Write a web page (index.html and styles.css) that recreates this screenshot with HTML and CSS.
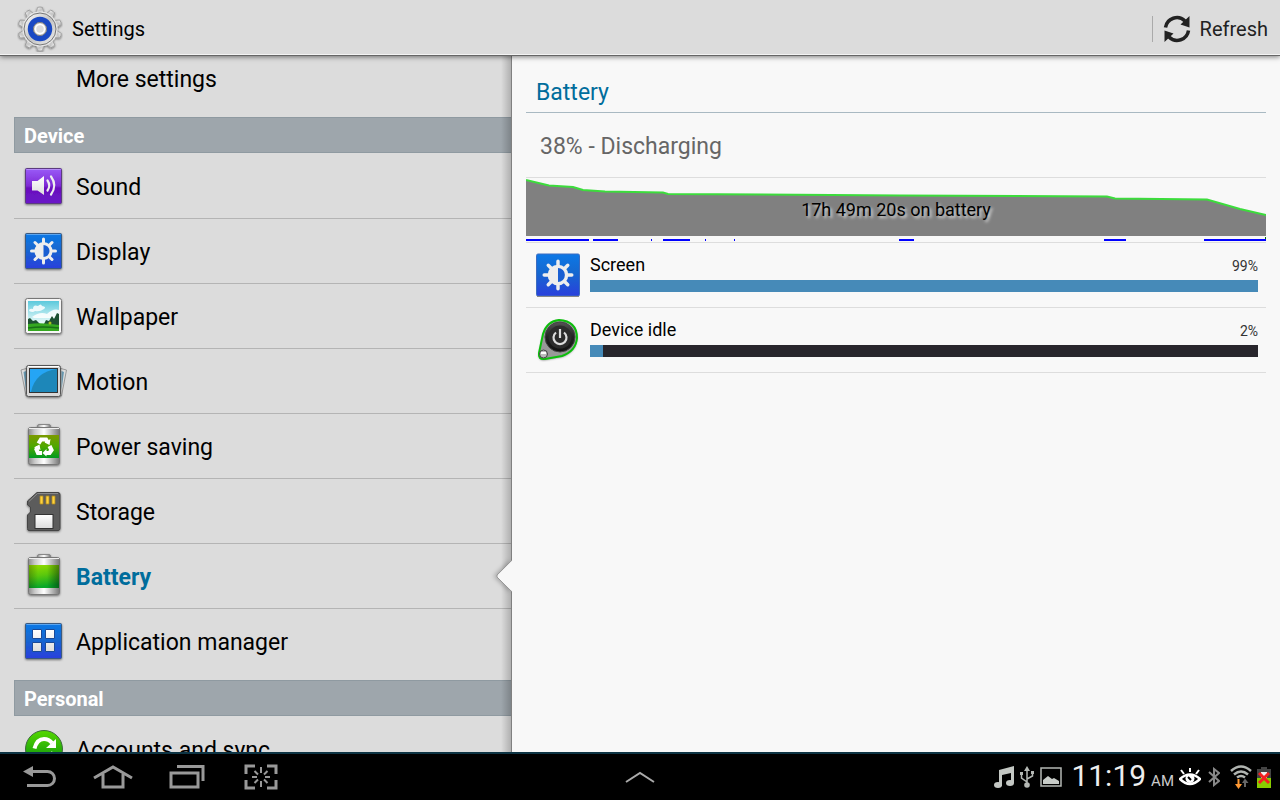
FILE: index.html
```html
<!DOCTYPE html>
<html lang="en">
<head>
    <meta charset="UTF-8">
    <meta name="viewport" content="width=device-width, initial-scale=1.0">
    <title>Settings</title>
    <link rel="stylesheet" href="styles.css">
</head>
<body>
    <!-- shared gradients and shapes -->
    <svg class="defs" width="0" height="0" aria-hidden="true">
        <defs>
            <linearGradient id="blue" x1="0" y1="0" x2="0" y2="1"><stop offset="0" stop-color="#0d78e6"/><stop offset="0.45" stop-color="#1568d0"/><stop offset="1" stop-color="#2a3fdc"/></linearGradient>
            <linearGradient id="purple" x1="0" y1="0" x2="0" y2="1"><stop offset="0" stop-color="#9a5cf8"/><stop offset="0.5" stop-color="#7d28d4"/><stop offset="0.55" stop-color="#6b10bd"/><stop offset="1" stop-color="#6a14c8"/></linearGradient>
            <linearGradient id="white" x1="0" y1="0" x2="0" y2="1"><stop offset="0" stop-color="#fff"/><stop offset="1" stop-color="#ddd"/></linearGradient>
            <linearGradient id="metal" x1="0" y1="0" x2="1" y2="0"><stop offset="0" stop-color="#8c8c8c"/><stop offset="0.2" stop-color="#c8c8c8"/><stop offset="0.5" stop-color="#fff"/><stop offset="0.75" stop-color="#bbb"/><stop offset="1" stop-color="#777"/></linearGradient>
            <linearGradient id="green" x1="0" y1="0" x2="0.2" y2="1"><stop offset="0" stop-color="#96dc00"/><stop offset="0.5" stop-color="#5cc80c"/><stop offset="1" stop-color="#08a828"/></linearGradient>
            <linearGradient id="edge" x1="0" y1="0" x2="1" y2="0"><stop offset="0" stop-color="#000" stop-opacity="0.25"/><stop offset="0.3" stop-color="#000" stop-opacity="0"/><stop offset="0.6" stop-color="#000" stop-opacity="0"/><stop offset="1" stop-color="#000" stop-opacity="0.4"/></linearGradient>
            <linearGradient id="leaf" x1="0" y1="0" x2="0" y2="1"><stop offset="0" stop-color="#7c9a00"/><stop offset="0.5" stop-color="#4fa800"/><stop offset="1" stop-color="#009a20"/></linearGradient>
            <linearGradient id="sync" x1="0" y1="0" x2="0" y2="1"><stop offset="0" stop-color="#55d800"/><stop offset="1" stop-color="#008a10"/></linearGradient>
            <linearGradient id="sky" x1="0" y1="0" x2="0" y2="1"><stop offset="0" stop-color="#5cc9dc"/><stop offset="0.7" stop-color="#e2f8f8"/></linearGradient>
            <linearGradient id="gear" x1="0" y1="0" x2="1" y2="1"><stop offset="0" stop-color="#fff"/><stop offset="0.5" stop-color="#c4c4c4"/><stop offset="1" stop-color="#eee"/></linearGradient>
            <linearGradient id="dark" x1="0" y1="0" x2="0" y2="1"><stop offset="0" stop-color="#555"/><stop offset="0.5" stop-color="#222"/><stop offset="1" stop-color="#111"/></linearGradient>
            <filter id="shade" x="-20%" y="-20%" width="150%" height="150%"><feDropShadow dx="0" dy="1" stdDeviation="1" flood-opacity="0.5"/></filter>
            <g id="sun">
                <path d="M0-12V12M-12 0H12M-8.500-8.500L8.500 8.500M8.500-8.500L-8.500 8.500" stroke="#eee" stroke-width="3" stroke-linecap="round"/>
                <circle r="9" fill="#eee"/>
                <path d="M0-6A6 6 0 0 1 0 6Z" fill="#1a5fd2"/>
            </g>
            <g id="cell">
                <rect x="17.500" y="2.500" width="13" height="5" rx="1.500" fill="url(#metal)" stroke="#888"/>
                <rect x="8.500" y="5.500" width="31" height="37" rx="2" fill="url(#metal)" stroke="#777"/>
                <path d="M9 6.500H39" stroke="#eee"/>
            </g>
        </defs>
    </svg>

    <header class="topbar">
        <svg class="logo" viewBox="0 0 46 46" width="46" height="46" aria-hidden="true">
            <g filter="url(#shade)">
                <g fill="url(#gear)" stroke="#999" stroke-width="0.8">
                    <path id="tooth" d="M19 8L20.500 1.500Q23 0.500 25.500 1.500L27 8Z"/>
                    <use href="#tooth" transform="rotate(36 23 23)"/>
                    <use href="#tooth" transform="rotate(72 23 23)"/>
                    <use href="#tooth" transform="rotate(108 23 23)"/>
                    <use href="#tooth" transform="rotate(144 23 23)"/>
                    <use href="#tooth" transform="rotate(180 23 23)"/>
                    <use href="#tooth" transform="rotate(216 23 23)"/>
                    <use href="#tooth" transform="rotate(252 23 23)"/>
                    <use href="#tooth" transform="rotate(288 23 23)"/>
                    <use href="#tooth" transform="rotate(324 23 23)"/>
                </g>
                <circle cx="23" cy="23" r="17.500" fill="#e8e8e8"/>
            </g>
            <circle cx="23" cy="23" r="16" fill="url(#gear)" stroke="#777"/>
            <circle cx="23" cy="23" r="9.500" fill="none" stroke="#1a49c4" stroke-width="5.500"/>
            <circle cx="23" cy="23" r="6.500" fill="#e4e4e4" stroke="#777"/>
            <circle cx="23" cy="23" r="4.500" fill="#ddd" stroke="#fff" stroke-width="1.500"/>
        </svg>
        <h1>Settings</h1>
        <button class="refresh" type="button">
            <svg viewBox="0 0 28 28" width="28" height="28" fill="none" aria-hidden="true">
                <path d="M2.500 12.500A11.500 11.500 0 0 1 22 6M25.500 15.500A11.500 11.500 0 0 1 6 22" stroke="#222" stroke-width="3.500"/>
                <path d="M26.500 1V12.500L17.500 9.500ZM1.500 27V15.500L10.500 18.500Z" fill="#222"/>
            </svg>
            Refresh
        </button>
    </header>

    <main>
        <nav class="sidebar">
            <div class="list">
                <a class="item plain" href="#more">More settings</a>
                <h2>Device</h2>
                <a class="item" href="#sound">
                    <svg viewBox="0 0 48 48" width="48" height="48" aria-hidden="true">
                        <rect x="5.500" y="6.500" width="36" height="35" rx="1" fill="url(#purple)" stroke="#5b3a80" filter="url(#shade)"/>
                        <path d="M6.500 7.500H40.500" stroke="#b48cf8"/>
                        <path d="M12 19H17.500L24 14V33L17.500 28.500H12Z" fill="url(#white)"/>
                        <path d="M27.500 18.500Q31 23.500 27.500 28.500M31 14.500Q37.500 23.500 31 32.500" fill="none" stroke="#eee" stroke-width="2.200" stroke-linecap="round"/>
                    </svg>
                    Sound
                </a>
                <a class="item" href="#display">
                    <svg viewBox="0 0 48 48" width="48" height="48" aria-hidden="true">
                        <rect x="5.500" y="6.500" width="36" height="35" rx="1" fill="url(#blue)" stroke="#3a5a80" filter="url(#shade)"/>
                        <path d="M6.500 7.500H40.500" stroke="#5aa5f0"/>
                        <use href="#sun" x="23.500" y="24"/>
                    </svg>
                    Display
                </a>
                <a class="item" href="#wallpaper">
                    <svg viewBox="0 0 48 48" width="48" height="48" aria-hidden="true">
                        <rect x="5.500" y="6.500" width="36" height="35" rx="2" fill="#f6f6f6" stroke="#777" filter="url(#shade)"/>
                        <rect x="8" y="9" width="31" height="30" fill="url(#sky)"/>
                        <path d="M9 19Q9 16 13 17Q13 12 18 14Q21 11 22 14Q27 15 24 17Q20 20 15 19Q13 21 9 19ZM12 25Q20 19 27 22Q33 16 39 18V26H14Z" fill="#fff" opacity="0.850"/>
                        <path d="M8 27L10 26L13 29L16 28L20 32H24L26 28L29 29L32 24L34 27L37 21L39 22V35H8Z" fill="#1e5032"/>
                        <path d="M8 32Q22 30 39 33V39H8Z" fill="#35a820"/>
                        <path d="M8 36Q22 34 39 36" stroke="#187018" stroke-width="1.500" fill="none"/>
                        <circle cx="30" cy="31" r="1.500" fill="#a8c020"/>
                    </svg>
                    Wallpaper
                </a>
                <a class="item" href="#motion">
                    <svg viewBox="0 0 48 48" width="48" height="48" aria-hidden="true">
                        <path d="M1 13L8 11V39H6ZM46.500 13L39 11V39H41.500Z" fill="#ddd" stroke="#999"/>
                        <path d="M3.500 15L6 14V33ZM44 15L41.500 14V33Z" fill="#6c9cb4"/>
                        <rect x="6.500" y="8.500" width="34" height="31" rx="2" fill="#d8d8d8" stroke="#555" filter="url(#shade)"/>
                        <path d="M8 9.500H39" stroke="#fff"/>
                        <rect x="9.500" y="11.500" width="28" height="24" fill="#25a5f5" stroke="#333"/>
                        <path d="M11 35Q15 15 37 12V35Z" fill="#1d87b9"/>
                    </svg>
                    Motion
                </a>
                <a class="item" href="#power">
                    <svg viewBox="0 0 48 48" width="48" height="48" aria-hidden="true">
                        <use href="#cell" filter="url(#shade)"/>
                        <rect x="9" y="13" width="30" height="23" fill="url(#leaf)"/>
                        <g fill="none" stroke="#fff" stroke-width="4.200">
                            <path d="M18.500 21.500L21 17.500H26L27.500 20"/>
                            <path d="M29.500 24L31.500 28L29.500 31H26"/>
                            <path d="M22 31H18L16.500 27.500L18 25"/>
                        </g>
                        <path d="M30.500 17L29.500 23L24.500 20.500ZM26.500 27V34.500L22.500 31ZM14 25.500L19.500 22.500L20.500 28Z" fill="#fff"/>
                    </svg>
                    Power saving
                </a>
                <a class="item" href="#storage">
                    <svg viewBox="0 0 48 48" width="48" height="48" aria-hidden="true">
                        <path d="M17 5.500H38Q40 5.500 40 7.500V41.500Q40 43.500 38 43.500H9Q7.500 43.500 7.500 41.500V28L10.500 25V20L7.500 18V14Z" fill="#5c5c5c" stroke="#444" filter="url(#shade)"/>
                        <path d="M9 14.500L17.500 6.500H38" fill="none" stroke="#8a8a8a"/>
                        <path d="M20 9H23V17H20ZM26 9H29V17H26ZM32 9H35V17H32Z" fill="#ffd23c" stroke="#b08c20" stroke-width="0.800"/>
                        <rect x="15" y="27.500" width="18" height="14" fill="url(#white)" stroke="#333"/>
                    </svg>
                    Storage
                </a>
                <a class="item selected" href="#battery" aria-current="page">
                    <svg viewBox="0 0 48 48" width="48" height="48" aria-hidden="true">
                        <use href="#cell" filter="url(#shade)"/>
                        <rect x="9" y="13" width="30" height="23" fill="url(#green)"/>
                        <rect x="9" y="13" width="30" height="23" fill="url(#edge)"/>
                    </svg>
                    Battery
                    <svg class="notch" viewBox="0 0 16 32" width="16" height="32" aria-hidden="true">
                        <path d="M16 0.500L1 15.500V17L16 31.500Z" fill="#f8f8f8"/>
                        <path d="M15.500 0.500L1 15V17L15.500 31.500" fill="none" stroke="#999"/>
                    </svg>
                </a>
                <a class="item last" href="#apps">
                    <svg viewBox="0 0 48 48" width="48" height="48" aria-hidden="true">
                        <rect x="5.500" y="6.500" width="36" height="35" rx="1" fill="url(#blue)" stroke="#3a5a80" filter="url(#shade)"/>
                        <path d="M6.500 7.500H40.500" stroke="#5aa5f0"/>
                        <path d="M12.500 12.500H21.500V21.500H12.500ZM25.500 12.500H34.500V21.500H25.500ZM12.500 25.500H21.500V34.500H12.500ZM25.500 25.500H34.500V34.500H25.500Z" fill="url(#white)" stroke="#1a4a98"/>
                    </svg>
                    Application manager
                </a>
                <h2>Personal</h2>
                <a class="item" href="#accounts">
                    <svg viewBox="0 0 48 48" width="48" height="48" aria-hidden="true">
                        <circle cx="24" cy="24" r="18.500" fill="url(#sync)" stroke="#3c6a3c"/>
                        <path d="M14.500 23.500Q17 14 24 14Q29 14 32 18" fill="none" stroke="#fff" stroke-width="4"/>
                        <path d="M36 14V23H26Z" fill="#fff"/>
                        <path d="M33 27Q31 34 24 34Q19 34 16 31" fill="none" stroke="#fff" stroke-width="4"/>
                        <path d="M12 35V27H21Z" fill="#fff"/>
                    </svg>
                    Accounts and sync
                </a>
            </div>
        </nav>

        <section class="detail">
            <h2>Battery</h2>
            <p class="status">38% - Discharging</p>
            <div class="chart">
                <svg viewBox="0 0 740 64" width="100%" height="64" preserveAspectRatio="none" aria-hidden="true">
                    <path d="M0 2L23 7.500L47 9L57 12L79 13.500L137 14.500L142 16L374 17.500L581 18.500L589 20.500L681 21.500L714 31L740 37V58H0Z" fill="#808080"/>
                    <path d="M0 2L23 7.500L47 9L57 12L79 13.500L137 14.500L142 16L374 17.500L581 18.500L589 20.500L681 21.500L714 31L740 37" fill="none" stroke="#3cdc3c" stroke-width="2"/>
                    <!-- screen-on periods -->
                    <path d="M0 62H63M67 62H92M125 62H126M137 62H164M179 62H180M208 62H209M373 62H388M578 62H600M678 62H740" stroke="#00f" stroke-width="2"/>
                    <path d="M739 59H740V61H739Z" fill="#007000"/>
                </svg>
                <span>17h 49m 20s on battery</span>
            </div>
            <div class="usage">
                <svg viewBox="0 0 44 44" width="44" height="44" aria-hidden="true">
                    <rect x="0.500" y="1" width="43" height="42" rx="1.500" fill="url(#blue)" stroke="#3c6cc0"/>
                    <path d="M1 43.500H43" stroke="#888"/>
                    <use href="#sun" transform="translate(22 22) scale(1.15)"/>
                </svg>
                <div class="info">
                    <div class="labels"><span>Screen</span><small>99%</small></div>
                    <div class="bar"><div class="fill" style="width: 100%"></div></div>
                </div>
            </div>
            <div class="usage">
                <svg viewBox="0 0 44 44" width="44" height="44" aria-hidden="true">
                    <path d="M7 16Q11 3 23 2Q41 3 41 20Q40 33 26 38L9 41Q2 42 3 35Z" fill="#aaa" filter="url(#shade)"/>
                    <path d="M7 16Q11 3 23 2Q41 3 41 20Q40 33 26 38L9 41Q2 42 3 35Z" fill="#999" stroke="#0cbe0c" stroke-width="2"/>
                    <circle cx="24" cy="19" r="15" fill="url(#dark)" stroke="#444"/>
                    <circle cx="24" cy="19" r="11.500" fill="#2c2c2c"/>
                    <path d="M20 14.500A6.500 6.500 0 1 0 28 14.500M24 11V20" fill="none" stroke="#ddd" stroke-width="2.200"/>
                    <circle cx="7.500" cy="36" r="4" fill="#bbb" stroke="#444"/>
                    <path d="M5 35H10" stroke="#fff" stroke-width="2"/>
                </svg>
                <div class="info">
                    <div class="labels"><span>Device idle</span><small>2%</small></div>
                    <div class="bar"><div class="fill" style="width: 2%"></div></div>
                </div>
            </div>
        </section>
    </main>

    <footer class="sysbar">
        <div class="keys">
            <button type="button" aria-label="Back">
                <svg viewBox="0 0 34 26" width="34" height="26" fill="none" stroke="#999" stroke-width="3"><path d="M8 7.500H25.500A6.500 6.500 0 0 1 25.500 21.500H5"/><path d="M1 7.500L11 2V13Z" fill="#999" stroke="none"/></svg>
            </button>
            <button type="button" aria-label="Home">
                <svg viewBox="0 0 40 26" width="40" height="26" fill="none" stroke="#999" stroke-width="3"><path d="M1 14L20 3L39 14M10 10V23H30V10"/></svg>
            </button>
            <button type="button" aria-label="Recent apps">
                <svg viewBox="0 0 36 26" width="36" height="26" fill="none" stroke="#999" stroke-width="3"><path d="M2 9H29V23H2ZM8 2.500H34V17"/></svg>
            </button>
            <button type="button" aria-label="Screenshot">
                <svg viewBox="0 0 34 26" width="34" height="26" fill="none" stroke="#999"><path d="M2 10V2H11M23 2H32V10M32 16V24H23M11 24H2V16" stroke-width="3"/><path d="M17 3V9M17 17V23M8 13H13M21 13H26M10.500 7L14 10.500M23.500 7L20 10.500M10.500 19L14 15.500M23.500 19L20 15.500" stroke-width="2"/></svg>
            </button>
        </div>
        <button type="button" aria-label="Open mini apps">
            <svg viewBox="0 0 30 14" width="30" height="14" fill="none" stroke="#aaa" stroke-width="2"><path d="M1 12L15 3L29 12"/></svg>
        </button>
        <div class="tray">
            <svg viewBox="0 0 20 22" width="20" height="22" fill="#c4c8c4"><path d="M5 4L20 0V17H17V7L8 9V20H5Z"/><ellipse cx="4" cy="19" rx="4" ry="3"/><ellipse cx="16" cy="17" rx="4" ry="3"/></svg>
            <svg viewBox="0 0 16 22" width="16" height="22" fill="none" stroke="#b4b8b4" stroke-width="1.500"><path d="M8 4V19M8 16L2.500 12V7M8 13L13.500 10V6"/><path d="M8 0L11 5H5Z" fill="#b4b8b4" stroke="none"/><circle cx="8" cy="19" r="2.800" fill="#b4b8b4" stroke="none"/><path d="M1 6H4V9H1ZM12 5H15V8H12Z" fill="#b4b8b4" stroke="none"/></svg>
            <svg viewBox="0 0 22 20" width="22" height="20"><rect x="1" y="1" width="20" height="18" fill="none" stroke="#b4b8b4" stroke-width="1.500"/><path d="M3 17V13L8 9L12 12L14 11L19 14V17Z" fill="#c8ccc8"/></svg>
            <time><span>11:19</span><small>AM</small></time>
            <svg viewBox="0 0 22 18" width="22" height="18" fill="none" stroke="#fff" stroke-width="2"><path d="M1 11Q11 2 21 11Q11 21 1 11Z" stroke-width="2.500"/><circle cx="11" cy="10.500" r="4.500" fill="#fff" stroke="none"/><path d="M9 9L12 12" stroke="#000"/><path d="M11 0V4M2 2L5 6M20 2L17 6"/></svg>
            <svg class="bt" viewBox="0 0 12 20" width="12" height="20" fill="none" stroke="#888" stroke-width="2"><path d="M1 5L11 14L6 18V2L11 6L1 15"/></svg>
            <svg viewBox="0 0 22 24" width="22" height="24" fill="none" stroke="#b0b4b0" stroke-width="2.500"><path d="M1 6Q11-3 21 6M4 9.500Q11 3.500 18 9.500M7 12.500Q11 9.500 15 12.500"/><path d="M8.500 14V20" stroke="#f93" stroke-width="2"/><path d="M5 19L8.500 24L12 19Z" fill="#f93" stroke="none"/><path d="M15 22V17" stroke="#666" stroke-width="2"/><path d="M12 18L15 13.500L18.500 18Z" fill="#666" stroke="none"/></svg>
            <svg viewBox="0 0 14 21" width="14" height="21"><path d="M4 0H10V2H14V21H0V2H4Z" fill="#444"/><path d="M0 11H14V21H0Z" fill="#8c0"/><path d="M4 5H10V11H4Z" fill="#eee"/><path d="M2 6L12 16M12 6L2 16" stroke="#f32020" stroke-width="3"/></svg>
        </div>
    </footer>
</body>
</html>
```

FILE: styles.css
```css
* { box-sizing: border-box}
body { margin: 0; height: 100vh; display: flex; flex-direction: column; overflow: hidden; font-family: Roboto, "Noto Sans", sans-serif; color: #000; background-color: #f8f8f8}
h1, h2, p { margin: 0; font-weight: 400}
a { color: inherit; text-decoration: none}
button { border: 0; padding: 0; background: none; font: inherit; color: inherit; cursor: pointer}
svg { display: block; flex-shrink: 0}
.defs { position: absolute}

/* top bar */
.topbar { position: relative; z-index: 1; display: flex; align-items: center; height: 56px; flex-shrink: 0; padding: 2px 12px 0 17px; gap: 9px; background-color: #dcdcdc; border-bottom: 1px solid #666; box-shadow: inset 0 -1px #f4f4f4, 0 1px 5px rgba(0,0,0,0.5)}
.topbar h1 { font-size: 20px}
.refresh { display: flex; align-items: center; gap: 9px; height: 26px; margin-left: auto; padding-left: 10px; border-left: 1px solid #aaa; font-size: 20px; color: #222}

main { flex: 1; min-height: 0; display: grid; grid-template-columns: 2fr 3fr}

/* left list */
.sidebar { position: relative; overflow: hidden; padding-left: 14px; background-color: #dcdcdc}
.sidebar::after { content: ""; position: absolute; top: 0; right: 0; bottom: 0; width: 10px; border-right: 1px solid #808080; background: linear-gradient(to right, rgba(0,0,0,0), rgba(0,0,0,0.2)); pointer-events: none}
.list { margin-top: -10px}
.list h2 { height: 36px; margin: 6px 0 1px; padding-left: 9px; border: 1px solid #8f9aa1; border-right: 0; background-color: #9ea6ac; color: #fff; font-size: 20px; font-weight: 700; line-height: 36px}
.item { position: relative; display: flex; align-items: center; gap: 8px; height: 65px; padding: 2px 0 0 6px; border-bottom: 1px solid #b4b4b4; font-size: 23px}
.item svg { margin-bottom: 2px}
.plain { padding-left: 62px}
.plain, .last { border-color: transparent}
.selected { color: #006d9c; font-weight: 700}
.notch { position: absolute; z-index: 1; right: 0; top: 16px; filter: drop-shadow(-2px 0 2px rgba(0,0,0,0.25))}

/* right pane */
.detail { padding: 0 14px; background-color: #f8f8f8}
.detail h2 { height: 57px; padding: 17px 10px 0; border-bottom: 1px solid #a9b9c2; color: #006d9c; font-size: 23px; line-height: 40px}
.status { height: 65px; padding-left: 14px; border-bottom: 1px solid #ddd; color: #666; font-size: 23px; line-height: 68px}
.chart { position: relative; height: 65px; border-bottom: 1px solid #ddd}
.chart span { position: absolute; top: 0; left: 0; right: 0; text-align: center; font-size: 18px; line-height: 64px; text-shadow: 2px 2px 3px #ddd}
.usage { display: flex; gap: 10px; height: 65px; padding: 10px 8px 0 10px; border-bottom: 1px solid #ddd}
.info { flex: 1}
.labels { display: flex; justify-content: space-between; align-items: baseline; font-size: 18px; line-height: 24px}
.labels small { font-size: 14px; color: #333}
.bar { height: 12px; margin-top: 2px; background-color: #28262c}
.fill { height: 100%; background-color: #468ab8}

/* system bar */
.sysbar { display: grid; grid-template-columns: 1fr auto 1fr; align-items: center; height: 48px; flex-shrink: 0; border-top: 2px solid #0d3444; background-color: #000}
.keys { display: flex; padding-left: 2px}
.keys button { display: flex; justify-content: center; width: 74px}
.tray { display: flex; justify-content: flex-end; align-items: center; gap: 5px; padding-right: 9px}
.tray time { display: flex; align-items: baseline; gap: 5px; padding: 2px 0 0 4px; font-size: 30px; line-height: 32px; color: #eee; white-space: nowrap}
.tray small { font-size: 15px; color: #ccc}
.bt { margin: 0 5px 0 2px}
```
